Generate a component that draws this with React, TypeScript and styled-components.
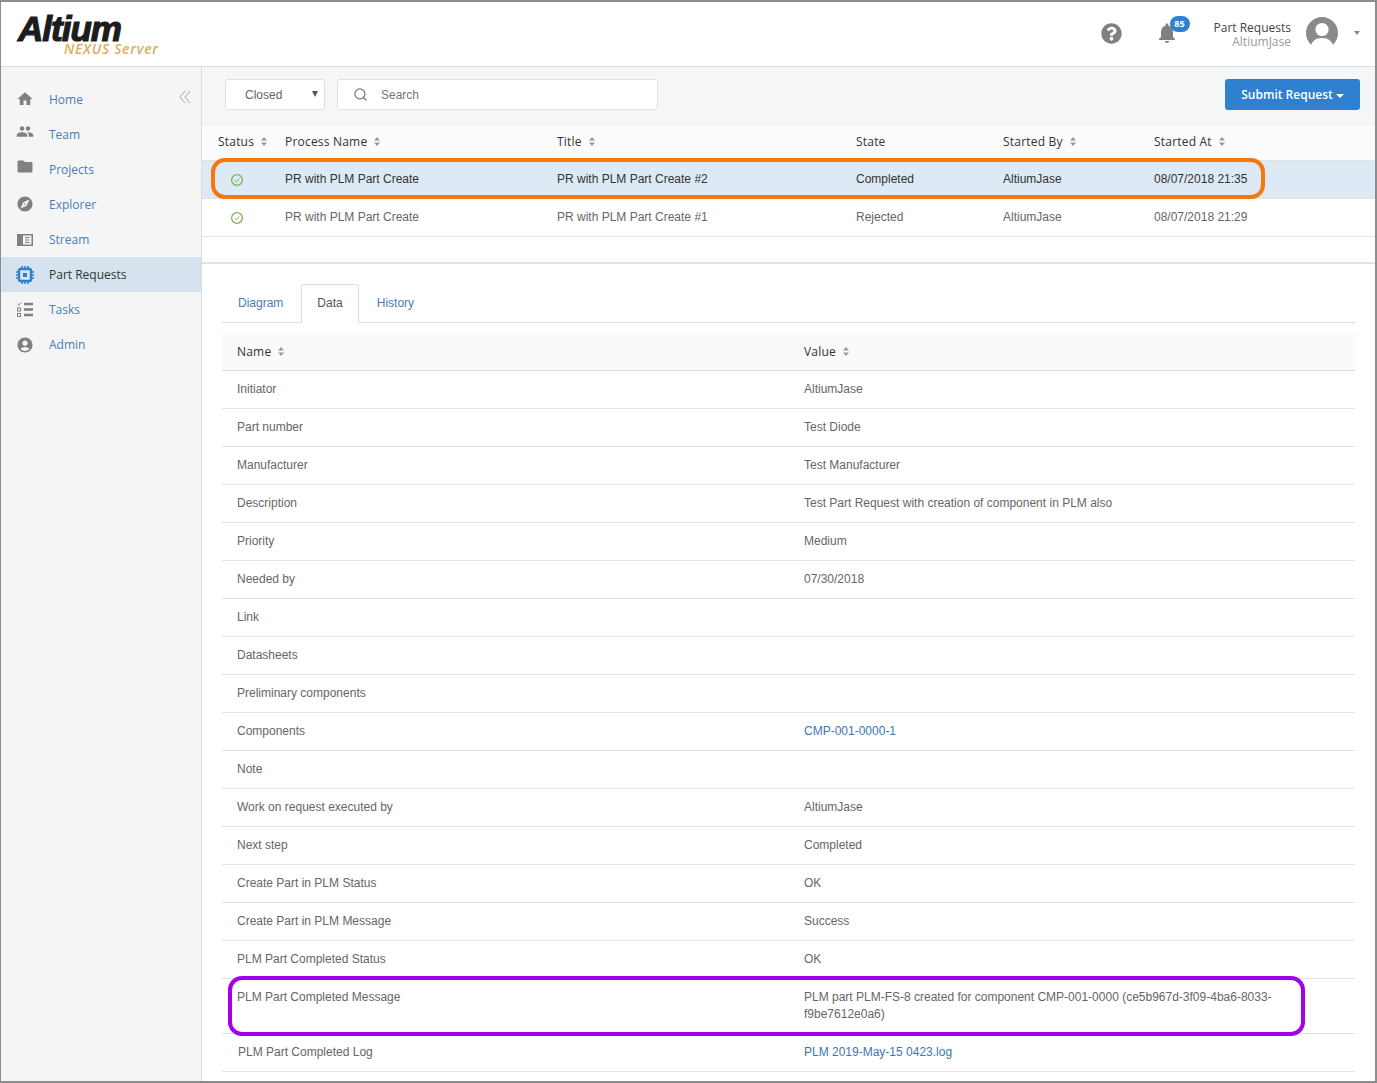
import styled, { createGlobalStyle } from 'styled-components';
import { MdHome, MdPeople, MdFolder, MdExplore, MdAccountCircle, MdNotifications } from 'react-icons/md';
import { FaQuestionCircle } from 'react-icons/fa';
import { LuSearch } from 'react-icons/lu';

const GlobalStyle = createGlobalStyle`
html, body {
    margin: 0;
    padding: 0;
    background: #fff;
}
* {
    box-sizing: border-box;
}
`;

const Frame = styled.div`
position: relative;
width: 1377px;
height: 1083px;
overflow: hidden;
display: flex;
flex-direction: column;
background: #fff;
border-top: 2px solid #8c8c8c;
border-left: 1px solid #8c8c8c;
border-right: 2px solid #8c8c8c;
border-bottom: 2px solid #8c8c8c;
`;

const Header = styled.header`
height: 65px;
flex: none;
display: flex;
align-items: center;
border-bottom: 1px solid #dcdcdc;
padding: 0 15px 2px 0;
`;

const Logo = styled.div`
width: 180px;
height: 63px;
padding: 12px 0 0 17px;
flex: none;
`;

const LogoMark = styled.div`
font-family: "Liberation Sans", sans-serif;
font-weight: 700;
font-style: italic;
font-size: 35px;
line-height: 30px;
letter-spacing: -1px;
color: #1c1c1c;
-webkit-text-stroke: 1.2px #1c1c1c;
`;

const LogoSub = styled.div`
font-family: "Open Sans", sans-serif;
font-weight: 600;
font-style: italic;
font-size: 14px;
line-height: 14px;
letter-spacing: 0.7px;
color: #dcae62;
margin: -2px 0 0 46px;
`;

const HeaderRight = styled.div`
margin-left: auto;
display: flex;
align-items: center;
color: #808080;
`;

const HelpIcon = styled(FaQuestionCircle)`
font-size: 21px;
color: #808080;
margin-right: 33px;
`;

const Bell = styled.div`
position: relative;
width: 24px;
height: 24px;
margin-right: 35px;
font-size: 26px;
display: flex;
align-items: center;
justify-content: center;
`;

const Badge = styled.span`
position: absolute;
top: -5px;
left: 15px;
width: 20px;
height: 16px;
border-radius: 8px;
background: #2f80d0;
color: #fff;
font: 700 9px/16px "Open Sans", sans-serif;
text-align: center;
`;

const UserText = styled.div`
text-align: right;
font-family: "Open Sans", sans-serif;
font-size: 12px;
line-height: 14px;
margin: 4px 15px 0 0;
color: #444;
`;

const UserSub = styled.div`
color: #999;
`;

const HeaderCaret = styled.span`
width: 0;
height: 0;
border-left: 3px solid transparent;
border-right: 3px solid transparent;
border-top: 4px solid #888;
margin-left: 16px;
`;

const Body = styled.div`
flex: 1;
display: flex;
min-height: 0;
`;

const Sidebar = styled.nav`
width: 201px;
flex: none;
background: #f5f5f6;
border-right: 1px solid #dcdcdc;
padding-top: 15px;
position: relative;
`;

const NavItem = styled.div<{ active?: boolean }>`
height: 35px;
display: flex;
align-items: center;
padding-left: 15px;
background: ${(props) => (props.active ? '#d6e3ef' : 'transparent')};
color: ${(props) => (props.active ? '#333' : '#4a7db5')};
font-family: "Open Sans", sans-serif;
font-size: 12px;
`;

const NavIcon = styled.span<{ active?: boolean; lift?: number; size?: number }>`
width: 18px;
height: 18px;
margin: 0 15px ${(props) => (props.lift || 0) * 2}px 0;
display: flex;
align-items: center;
justify-content: center;
font-size: ${(props) => props.size || 20}px;
color: ${(props) => (props.active ? '#2f80d0' : '#808080')};
`;

const Collapse = styled.svg`
position: absolute;
top: 23px;
left: 178px;
width: 12px;
height: 14px;
`;

const Main = styled.main`
flex: 1;
min-width: 0;
`;

const Toolbar = styled.div`
height: 57px;
display: flex;
align-items: center;
padding: 0 15px 2px 23px;
background: #f5f6f7;
`;

const Select = styled.div`
position: relative;
width: 100px;
height: 31px;
background: #fff;
border: 1px solid #e2e2e2;
border-radius: 3px;
padding-left: 19px;
margin-right: 12px;
font: 12px/30px "Liberation Sans", sans-serif;
color: #666;
`;

const SelectCaret = styled.span`
position: absolute;
top: 11px;
right: 6px;
width: 0;
height: 0;
border-left: 3px solid transparent;
border-right: 3px solid transparent;
border-top: 6px solid #555;
`;

const SearchBox = styled.div`
width: 321px;
height: 31px;
background: #fff;
border: 1px solid #e2e2e2;
border-radius: 3px;
display: flex;
align-items: center;
padding-left: 15px;
font: 12px "Liberation Sans", sans-serif;
color: #777;
`;

const SearchIcon = styled(LuSearch)`
font-size: 15px;
color: #777;
margin-right: 13px;
`;

const SubmitButton = styled.button`
margin-left: auto;
width: 135px;
height: 31px;
border: 0;
border-radius: 3px;
background: #2f80d0;
color: #fff;
font: 600 12px "Open Sans", sans-serif;
display: flex;
align-items: center;
justify-content: center;
gap: 3px;
padding: 0;
`;

const ButtonCaret = styled.span`
width: 0;
height: 0;
border-left: 4px solid transparent;
border-right: 4px solid transparent;
border-top: 4px solid #fff;
margin-top: 2px;
`;

const ProcessGrid = styled.div<{ selected?: boolean }>`
display: grid;
grid-template-columns: 67px 272px 299px 147px 151px 1fr;
align-items: center;
height: 38px;
padding: 0 0 2px 16px;
border-bottom: 1px solid #e3e3e3;
background: ${(props) => (props.selected ? '#dde9f5' : '#fff')};
color: ${(props) => (props.selected ? '#333' : '#666')};
font: 12px "Liberation Sans", sans-serif;
`;

const ProcessHead = styled(ProcessGrid)`
height: 37px;
background: #fbfbfb;
border-top: 1px solid #f0f0f0;
`;

const HeadCell = styled.div`
display: flex;
align-items: center;
gap: 7px;
font: 12px "Open Sans", sans-serif;
letter-spacing: 0.2px;
color: #333;
`;

const StatusIcon = styled.svg`
width: 14px;
height: 14px;
margin: 2px 0 0 12px;
`;

const Spacer = styled.div`
height: 27px;
border-bottom: 2px solid #e3e3e3;
`;

const Detail = styled.section`
padding: 20px 20px 0 20px;
`;

const Tabs = styled.div`
height: 39px;
display: flex;
align-items: flex-end;
gap: 2px;
border-bottom: 1px solid #dedede;
`;

const Tab = styled.div<{ active?: boolean }>`
height: 39px;
padding: 0 15px;
margin-bottom: -1px;
border: 1px solid ${(props) => (props.active ? '#dedede' : 'transparent')};
border-bottom-color: ${(props) => (props.active ? '#fff' : 'transparent')};
border-radius: 3px 3px 0 0;
background: ${(props) => (props.active ? '#fff' : 'transparent')};
font: 12px/37px "Liberation Sans", sans-serif;
color: ${(props) => (props.active ? '#555' : '#4a7db5')};
`;

const DataHead = styled.div`
display: grid;
grid-template-columns: 567px 1fr;
align-items: center;
height: 38px;
margin-top: 10px;
padding-left: 15px;
background: #fafafa;
border-bottom: 1px solid #dedede;
`;

const DataRow = styled.div<{ tall?: boolean; shifted?: boolean }>`
display: grid;
grid-template-columns: ${(props) => (props.shifted ? '566px' : '567px')} 1fr;
align-items: ${(props) => (props.tall ? 'start' : 'center')};
height: ${(props) => (props.tall ? '55px' : '38px')};
padding: ${(props) => (props.tall ? '10px' : '0')} 80px 0 ${(props) => (props.shifted ? '16px' : '15px')};
border-bottom: 1px solid #e3e3e3;
font: 12px/17px "Liberation Sans", sans-serif;
color: #666;
`;

const ValueLink = styled.span`
color: #3d77b0;
`;

const Highlight = styled.div<{ color: string }>`
position: absolute;
border: 4px solid ${(props) => props.color};
border-radius: 14px;
pointer-events: none;
`;

const OrangeHighlight = styled(Highlight)`
left: 210px;
top: 156px;
width: 1054px;
height: 41px;
`;

const PurpleHighlight = styled(Highlight)`
left: 227px;
top: 974px;
width: 1077px;
height: 60px;
`;

const SortIcon = () => (
    <svg width="6" height="9" viewBox="0 0 6 9">
        <path d="M3 0 L6 3.6 H0 Z M3 9 L0 5.4 H6 Z" fill="#999" />
    </svg>
);

const Check = () => (
    <StatusIcon viewBox="0 0 14 14">
        <circle cx="7" cy="7" r="5.4" fill="none" stroke="#7cb15a" strokeWidth="1.3" />
        <path d="M4.6 7.2 L6.4 8.8 L9.4 5.6" fill="none" stroke="#7cb15a" strokeWidth="1" />
    </StatusIcon>
);

const StreamIcon = () => (
    <svg width="16" height="14" viewBox="0 0 16 14">
        <path d="M0 1 H16 V13 H0 Z" fill="#808080" />
        <path d="M6 2.5 H14.5 V11.5 H6 Z" fill="#f5f5f6" />
        <path d="M8 4.5 H12.5 M8 7 H12.5 M8 9.5 H12.5" stroke="#808080" strokeWidth="1.1" />
    </svg>
);

const ChipIcon = () => (
    <svg width="18" height="18" viewBox="0 0 18 18">
        <rect x="3" y="3" width="12" height="12" rx="1.5" fill="none" stroke="#2f80d0" strokeWidth="2.4" />
        <rect x="7" y="7" width="4" height="4" fill="#2f80d0" />
        <path d="M6 0 V3 M9 0 V3 M12 0 V3 M6 15 V18 M9 15 V18 M12 15 V18 M0 6 H3 M0 9 H3 M0 12 H3 M15 6 H18 M15 9 H18 M15 12 H18" stroke="#2f80d0" strokeWidth="1.6" />
    </svg>
);

const TasksIcon = () => (
    <svg width="16" height="15" viewBox="0 0 16 15">
        <path d="M0.5 2 L1.8 3.2 L4 0.6" fill="none" stroke="#808080" strokeWidth="1" />
        <rect x="0.5" y="6" width="3" height="3" fill="none" stroke="#808080" />
        <rect x="0.5" y="11.5" width="3" height="3" fill="none" stroke="#808080" />
        <path d="M7 2 H16 M7 7.5 H16 M7 13 H16" stroke="#808080" strokeWidth="2.4" />
    </svg>
);

const AvatarIcon = () => (
    <svg width="32" height="32" viewBox="0 0 32 32">
        <circle cx="16" cy="16" r="16" fill="#8a8a8a" />
        <circle cx="16" cy="12.5" r="6.6" fill="#fff" />
        <path d="M4 32 C5 24 10 21 16 21 C22 21 27 24 28 32 Z" fill="#fff" />
    </svg>
);

const navItems = [
    { label: 'Home', icon: <MdHome />, lift: 1 },
    { label: 'Team', icon: <MdPeople />, lift: 3, size: 23 },
    { label: 'Projects', icon: <MdFolder />, lift: 3, size: 21 },
    { label: 'Explorer', icon: <MdExplore />, lift: 1 },
    { label: 'Stream', icon: <StreamIcon /> },
    { label: 'Part Requests', icon: <ChipIcon />, active: true },
    { label: 'Tasks', icon: <TasksIcon /> },
    { label: 'Admin', icon: <MdAccountCircle /> },
];

const processHeads = ['Status', 'Process Name', 'Title', 'State', 'Started By', 'Started At'];

const processRows = [
    { title: 'PR with PLM Part Create #2', state: 'Completed', time: '08/07/2018 21:35', selected: true },
    { title: 'PR with PLM Part Create #1', state: 'Rejected', time: '08/07/2018 21:29', selected: false },
];

const dataRows: [string, string, boolean?][] = [
    ['Initiator', 'AltiumJase'],
    ['Part number', 'Test Diode'],
    ['Manufacturer', 'Test Manufacturer'],
    ['Description', 'Test Part Request with creation of component in PLM also'],
    ['Priority', 'Medium'],
    ['Needed by', '07/30/2018'],
    ['Link', ''],
    ['Datasheets', ''],
    ['Preliminary components', ''],
    ['Components', 'CMP-001-0000-1', true],
    ['Note', ''],
    ['Work on request executed by', 'AltiumJase'],
    ['Next step', 'Completed'],
    ['Create Part in PLM Status', 'OK'],
    ['Create Part in PLM Message', 'Success'],
    ['PLM Part Completed Status', 'OK'],
];

function App() {
    return (
        <Frame>
            <GlobalStyle />
            <Header>
                <Logo>
                    <LogoMark>Altium</LogoMark>
                    <LogoSub>NEXUS Server</LogoSub>
                </Logo>
                <HeaderRight>
                    <HelpIcon />
                    <Bell>
                        <MdNotifications />
                        <Badge>85</Badge>
                    </Bell>
                    <UserText>
                        Part Requests
                        <UserSub>AltiumJase</UserSub>
                    </UserText>
                    <AvatarIcon />
                    <HeaderCaret />
                </HeaderRight>
            </Header>
            <Body>
                <Sidebar>
                    <Collapse viewBox="0 0 12 14">
                        <path d="M6 1 L1 7 L6 13 M11 1 L6 7 L11 13" fill="none" stroke="#aaa" strokeWidth="1" />
                    </Collapse>
                    {navItems.map((item) => (
                        <NavItem key={item.label} active={item.active}>
                            <NavIcon active={item.active} lift={item.lift} size={item.size}>{item.icon}</NavIcon>
                            {item.label}
                        </NavItem>
                    ))}
                </Sidebar>
                <Main>
                    <Toolbar>
                        <Select>
                            Closed
                            <SelectCaret />
                        </Select>
                        <SearchBox>
                            <SearchIcon />
                            Search
                        </SearchBox>
                        <SubmitButton>
                            Submit Request
                            <ButtonCaret />
                        </SubmitButton>
                    </Toolbar>
                    <ProcessHead>
                        {processHeads.map((head) => (
                            <HeadCell key={head}>
                                {head}
                                {head !== 'State' && <SortIcon />}
                            </HeadCell>
                        ))}
                    </ProcessHead>
                    {processRows.map((row) => (
                        <ProcessGrid key={row.title} selected={row.selected}>
                            <Check />
                            <div>PR with PLM Part Create</div>
                            <div>{row.title}</div>
                            <div>{row.state}</div>
                            <div>AltiumJase</div>
                            <div>{row.time}</div>
                        </ProcessGrid>
                    ))}
                    <Spacer />
                    <Detail>
                        <Tabs>
                            <Tab>Diagram</Tab>
                            <Tab active>Data</Tab>
                            <Tab>History</Tab>
                        </Tabs>
                        <DataHead>
                            <HeadCell>Name <SortIcon /></HeadCell>
                            <HeadCell>Value <SortIcon /></HeadCell>
                        </DataHead>
                        {dataRows.map(([name, value, link]) => (
                            <DataRow key={name}>
                                <div>{name}</div>
                                <div>{link ? <ValueLink>{value}</ValueLink> : value}</div>
                            </DataRow>
                        ))}
                        <DataRow tall>
                            <div>PLM Part Completed Message</div>
                            <div>PLM part PLM-FS-8 created for component CMP-001-0000 (ce5b967d-3f09-4ba6-8033-f9be7612e0a6)</div>
                        </DataRow>
                        <DataRow shifted>
                            <div>PLM Part Completed Log</div>
                            <div><ValueLink>PLM 2019-May-15 0423.log</ValueLink></div>
                        </DataRow>
                    </Detail>
                </Main>
            </Body>
            <OrangeHighlight color="#f5780f" />
            <PurpleHighlight color="#a400e8" />
        </Frame>
    );
}

export default App;
